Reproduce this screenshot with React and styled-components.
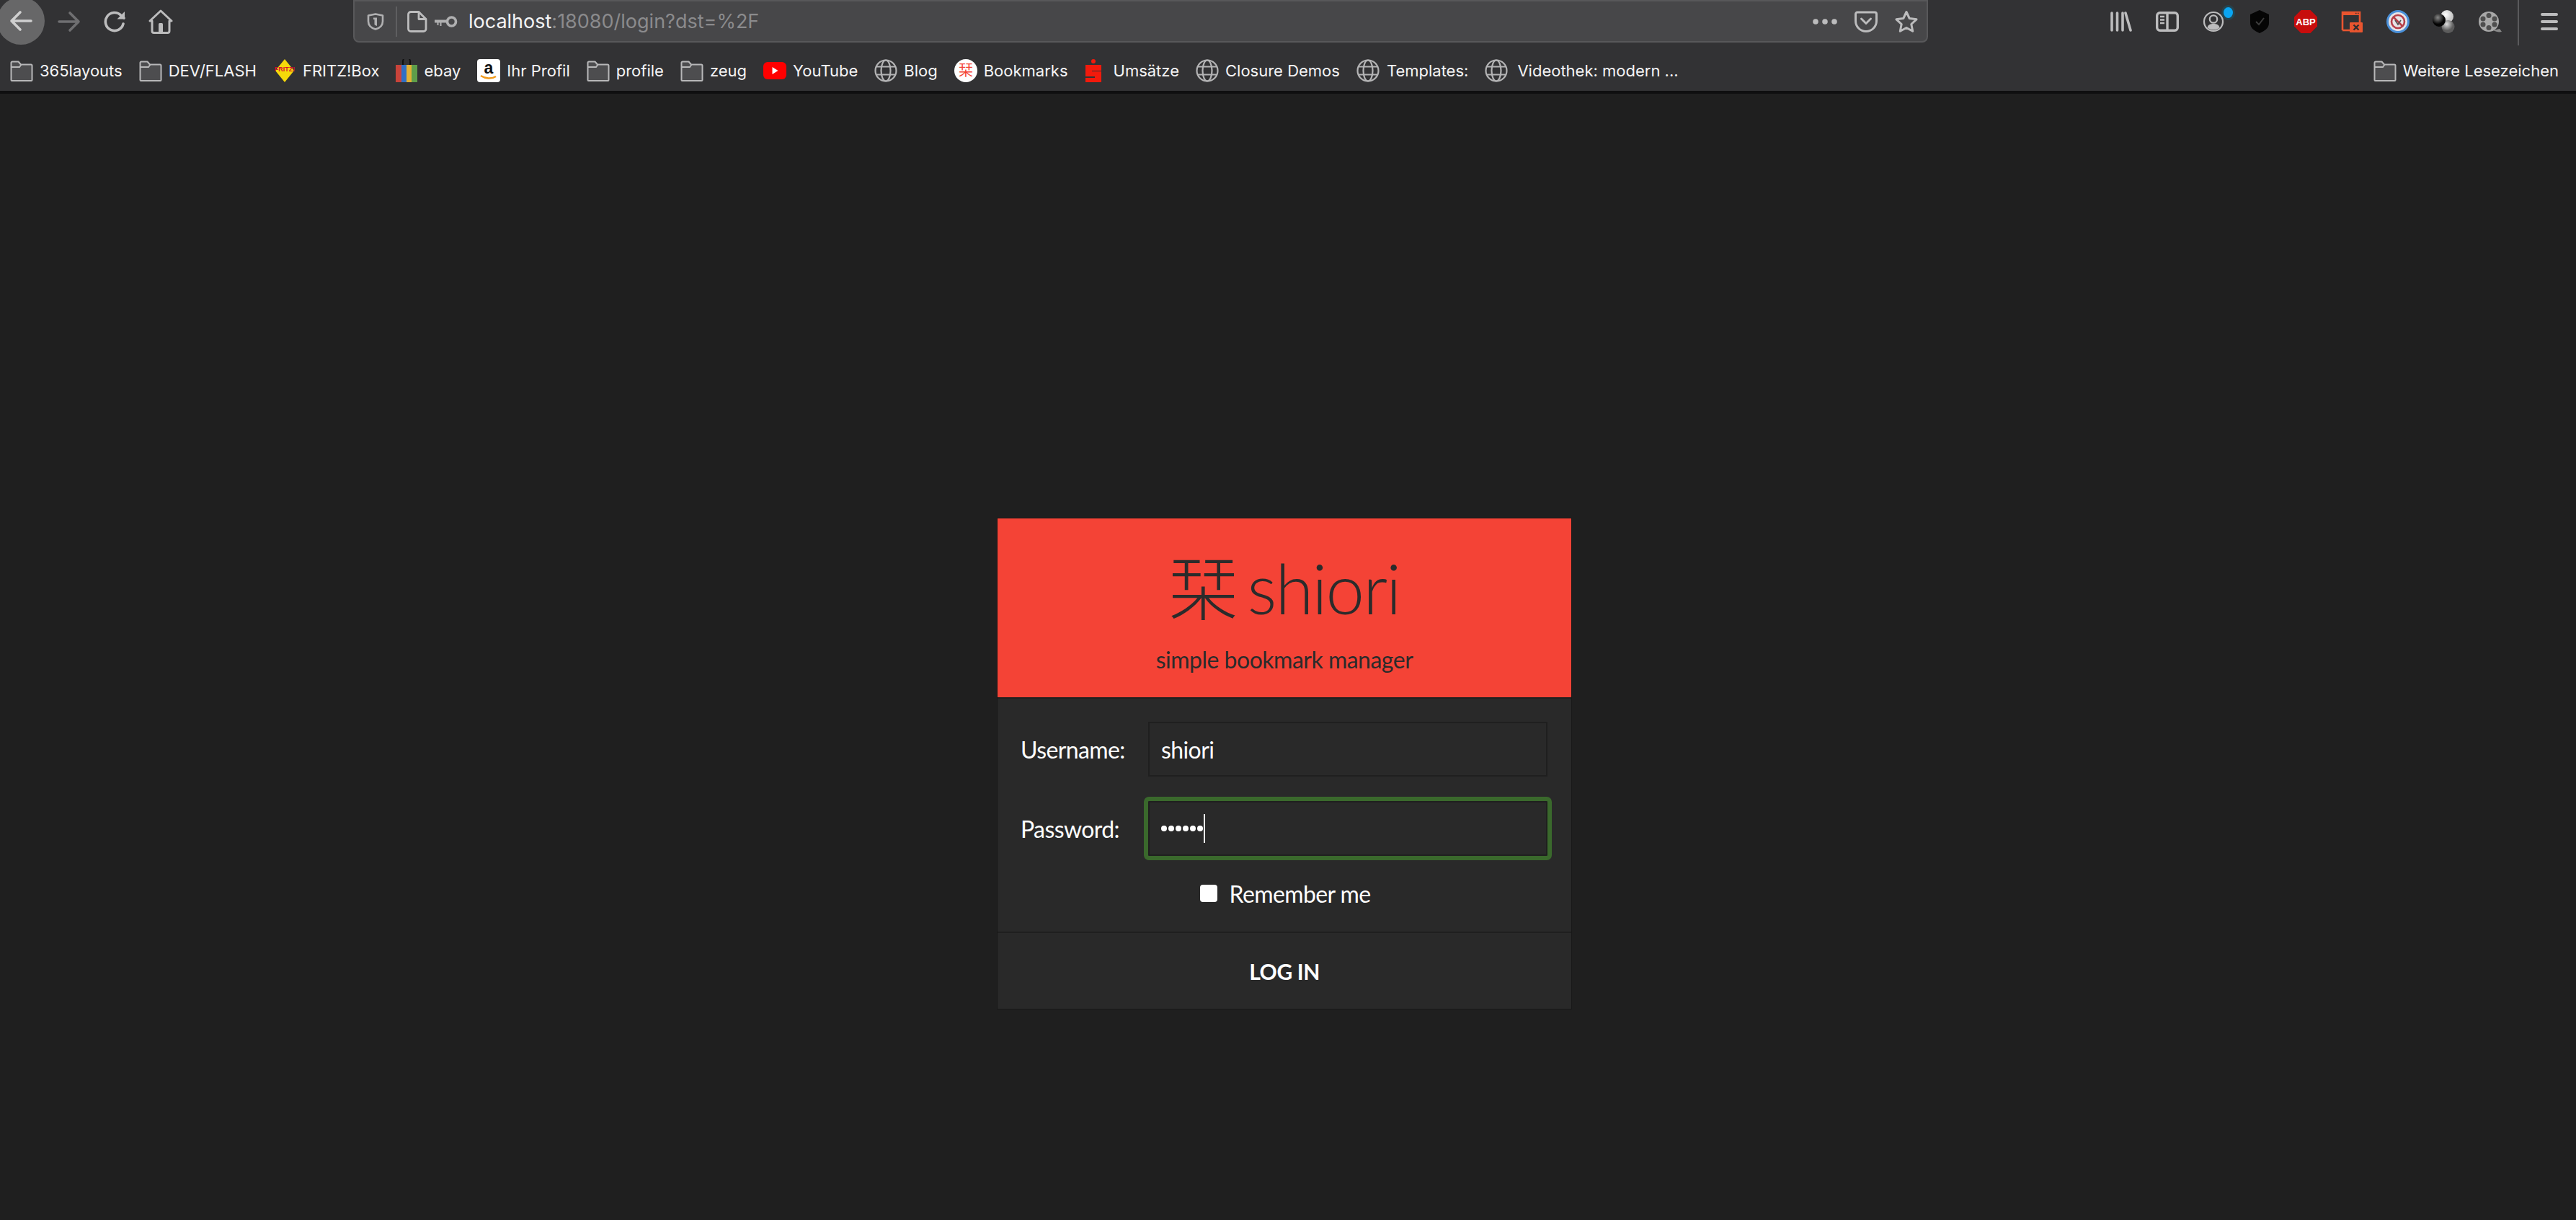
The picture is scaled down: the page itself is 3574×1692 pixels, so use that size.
import React from 'react';
import styled, { createGlobalStyle } from 'styled-components';

const Global = createGlobalStyle`
  html, body { margin: 0; padding: 0; background: #1f1f1f; }
  body { font-family: "Inter", "Liberation Sans", sans-serif; overflow: hidden; }
  * { box-sizing: border-box; }
`;

const Page = styled.div`
  width: 3574px;
  height: 1692px;
  display: flex;
  flex-direction: column;
  background: #1f1f1f;
  overflow: hidden;
`;

/* ---------- browser chrome ---------- */
const Chrome = styled.header`
  height: 130px;
  flex: none;
  background: #323234;
  border-bottom: 4px solid #0f0f10;
`;

const Toolbar = styled.div`
  height: 64px;
  display: flex;
  align-items: flex-start;
  padding-right: 5px;
`;

const NavButton = styled.div`
  width: ${p => p.$w}px;
  height: 59px;
  margin-left: ${p => p.$ml || 0}px;
  flex: none;
  display: flex;
  align-items: center;
  justify-content: center;
`;

const BackButton = styled.div`
  width: 66px;
  height: 66px;
  margin: -4px 0 0 -4px;
  flex: none;
  border-radius: 50%;
  background: #676768;
  display: flex;
  align-items: center;
  justify-content: center;
`;

const UrlBar = styled.div`
  width: 2185px;
  height: 59px;
  margin-left: 250px;
  flex: none;
  display: flex;
  align-items: center;
  background: #474749;
  border: 2px solid #58585a;
  border-radius: 0 0 8px 8px;
  padding: 0 12px 0 17px;
`;

const UrlDivider = styled.span`
  width: 2px;
  height: 42px;
  margin: 0 14px 0 16px;
  background: #5e5e60;
`;

const UrlText = styled.div`
  margin-left: 15px;
  flex: 1;
  font-size: 27px;
  color: #8b8b8d;
  white-space: nowrap;
  b { font-weight: 400; color: #f4f4f5; }
`;

const UrlAction = styled.span`
  margin-left: ${p => p.$ml || 0}px;
  display: flex;
`;

const Extensions = styled.div`
  margin-left: auto;
  display: flex;
  height: 59px;
`;

const ExtSlot = styled.div`
  width: 64px;
  height: 59px;
  display: flex;
  align-items: center;
  justify-content: center;
  position: relative;
`;

const ToolbarSep = styled.span`
  width: 2px;
  height: 63px;
  margin-left: 6px;
  flex: none;
  background: #5a5a5c;
`;

const MenuSlot = styled(ExtSlot)`
  margin-left: 10px;
`;

const BookmarksBar = styled.nav`
  height: 62px;
  display: flex;
  align-items: center;
  padding: 6px 24px 0 14px;
  gap: 23px;
`;

const Bookmark = styled.div`
  display: flex;
  align-items: center;
  gap: ${p => p.$gap || 9}px;
  font-size: 22px;
  color: #f4f4f5;
  white-space: nowrap;
  margin-left: ${p => (p.$end ? 'auto' : 0)};
  svg { flex: none; }
`;

/* ---------- login card ---------- */
const Main = styled.main`
  flex: 1;
  display: flex;
  justify-content: center;
  align-items: flex-start;
  padding: 588px 10px 0 0;
`;

const Card = styled.section`
  width: 798px;
  border: 1px solid #181818;
  background: #292929;
  font-family: "Lato", "Noto Sans", sans-serif;
  color: #fff;
`;

const Header = styled.div`
  height: 248px;
  background: #f44336;
  color: #2b2b2b;
  display: flex;
  flex-direction: column;
  align-items: center;
`;

const Logo = styled.div`
  margin-top: 48px;
  height: 96px;
  line-height: 96px;
  font-size: 96px;
  font-weight: 300;
  letter-spacing: -2px;
  word-spacing: -9px;
  white-space: nowrap;
  font-family: "Lato", "Noto Sans CJK JP", sans-serif;
`;

const Tagline = styled.div`
  margin-top: 32px;
  font-size: 32px;
  line-height: 40px;
  letter-spacing: -0.5px;
`;

const Form = styled.div`
  border-top: 2px solid #1f1f1f;
  padding: 32px 32px 0;
  height: 327px;
  border-bottom: 2px solid #1f1f1f;
`;

const Row = styled.div`
  display: flex;
  align-items: center;
  height: 76px;
  margin-bottom: ${p => p.$mb || 0}px;
`;

const Label = styled.label`
  width: 177px;
  flex: none;
  font-size: 32px;
  letter-spacing: -0.6px;
`;

const Input = styled.input`
  width: 554px;
  height: 76px;
  flex: none;
  padding: 0 16px;
  background: #292929;
  border: 2px solid #1f1f1f;
  color: #fff;
  font: 32px "Lato", sans-serif;
  letter-spacing: -0.6px;
  outline: none;
`;

const FocusField = styled.div`
  width: 554px;
  height: 76px;
  flex: none;
  padding: 0 16px;
  display: flex;
  align-items: center;
  background: #292929;
  border: 2px solid #1f1f1f;
  outline: 6px solid #3a692c;
  border-radius: 1px;
`;

const Dots = styled.span`
  display: flex;
  gap: 2px;
`;

const Dot = styled.i`
  width: 8px;
  height: 8px;
  border-radius: 50%;
  background: #fff;
`;

const Caret = styled.i`
  width: 2px;
  height: 40px;
  margin-left: 1px;
  background: #fff;
`;

const Remember = styled.label`
  display: flex;
  align-items: center;
  justify-content: center;
  gap: 16px;
  padding-left: 3px;
  font-size: 32px;
  letter-spacing: -0.6px;
  margin-top: 30px;
  height: 44px;
`;

const Check = styled.input`
  appearance: none;
  width: 24px;
  height: 24px;
  margin: 0;
  background: #fff;
  border-radius: 4px;
`;

const LoginButton = styled.button`
  display: block;
  width: 100%;
  height: 105px;
  border: 0;
  background: #292929;
  color: #fff;
  font: 700 30px "Lato", sans-serif;
  letter-spacing: -0.4px;
  text-transform: uppercase;
`;

/* ---------- icons ---------- */
const stroke = { fill: 'none', stroke: '#bcbcbd', strokeWidth: 3.4, strokeLinecap: 'round', strokeLinejoin: 'round' };

const Arrow = ({ color, dir }) => (
  <svg width="32" height="30" viewBox="0 0 32 30">
    <path
      d={dir === 'left' ? 'M30 15H3M15 3 3 15l12 12' : 'M2 15h27M17 3l12 12-12 12'}
      fill="none" stroke={color} strokeWidth="3.6" strokeLinecap="round" strokeLinejoin="round"
    />
  </svg>
);

const Reload = () => (
  <svg width="32" height="32" viewBox="0 0 32 32">
    <path d="M27 19a12.5 12.5 0 1 1-3-11.5L28 11" {...stroke} strokeWidth="3.6" />
    <path d="M29 2v10.5H18.5z" fill="#bcbcbd" />
  </svg>
);

const Home = () => (
  <svg width="34" height="34" viewBox="0 0 34 34">
    <path d="M2 16 17 2l15 14-3 0v14a2.5 2.5 0 0 1-2.5 2.5h-19A2.5 2.5 0 0 1 5 30V16z" {...stroke} strokeWidth="3" />
    <rect x="14" y="19" width="6" height="13" rx="1.5" fill="#bcbcbd" />
  </svg>
);

const UrlShield = () => (
  <svg width="24" height="24" viewBox="0 0 24 24">
    <path d="M2 3.5 12 1.5l10 2v8c0 6-4.5 9.5-10 11-5.5-1.5-10-5-10-11z" fill="none" stroke="#b0b0b1" strokeWidth="2.6" strokeLinejoin="round" />
    <path d="M9 6.5h5V18l-2.5-1-1-1V9H9z" fill="#b0b0b1" />
  </svg>
);

const PageIcon = () => (
  <svg width="28" height="30" viewBox="0 0 28 30">
    <path d="M5 1.5h11l10 10V25a3.5 3.5 0 0 1-3.5 3.5H5A3.5 3.5 0 0 1 1.5 25V5A3.5 3.5 0 0 1 5 1.5z" {...stroke} strokeWidth="2.8" />
    <path d="M16 2v9.5h9.5" {...stroke} strokeWidth="2.8" />
  </svg>
);

const KeySlot = styled.span`
  margin-left: 10px;
  display: flex;
`;

const KeyIcon = () => (
  <svg width="32" height="18" viewBox="0 0 32 18">
    <circle cx="23.5" cy="9" r="6" fill="none" stroke="#b0b0b1" strokeWidth="3.6" />
    <path d="M0 6.5h17v4H9.5V15h-2v-4.500h-2V14h-2v-3.500H0z" fill="#b0b0b1" />
  </svg>
);

const MoreDots = () => (
  <svg width="34" height="8" viewBox="0 0 34 8">
    <circle cx="4" cy="4" r="3.8" fill="#bcbcbd" />
    <circle cx="17" cy="4" r="3.8" fill="#bcbcbd" />
    <circle cx="30" cy="4" r="3.8" fill="#bcbcbd" />
  </svg>
);

const Pocket = () => (
  <svg width="32" height="30" viewBox="0 0 32 30">
    <path d="M4 2h24a2.500 2.500 0 0 1 2.500 2.500V14c0 8-6.500 14.500-14.500 14.500S1.500 22 1.500 14V4.500A2.500 2.500 0 0 1 4 2z" {...stroke} strokeWidth="3" />
    <path d="m9.500 11 6.500 6.500 6.500-6.500" {...stroke} strokeWidth="3" />
  </svg>
);

const Star = () => (
  <svg width="32" height="32" viewBox="0 0 32 32">
    <path d="M16 2.500 20.200 11.500 30 12.800 22.800 19.500 24.700 29.300 16 24.500 7.300 29.300 9.200 19.500 2 12.800 11.800 11.500z" {...stroke} strokeWidth="3" />
  </svg>
);

const Library = () => (
  <svg width="30" height="28" viewBox="0 0 30 28">
    <path d="M2 2v24M9.500 2v24M17 2v24M21 2l7 24" {...stroke} strokeWidth="3.6" />
  </svg>
);

const Sidebar = () => (
  <svg width="32" height="28" viewBox="0 0 32 28">
    <rect x="1.7" y="1.7" width="28.600" height="24.600" rx="4" {...stroke} strokeWidth="3.4" />
    <path d="M16 2v24" {...stroke} strokeWidth="3.4" />
    <path d="M6 7h6M6 11.500h6M6 16h6" {...stroke} strokeWidth="2.4" strokeLinecap="butt" />
  </svg>
);

const Account = () => (
  <svg width="30" height="30" viewBox="0 0 30 30">
    <circle cx="15" cy="15" r="13" fill="none" stroke="#bcbcbd" strokeWidth="2.2" />
    <circle cx="15" cy="11.500" r="5.200" fill="none" stroke="#bcbcbd" strokeWidth="2.2" />
    <path d="M6.500 23c1-4 4.500-5 8.500-5s7.500 1 8.500 5c-2 2-5 3.500-8.500 3.500S8.500 25 6.500 23z" fill="#bcbcbd" />
  </svg>
);

const BadgeDot = styled.span`
  position: absolute;
  left: 46px;
  top: 10px;
  width: 13px;
  height: 15px;
  border-radius: 50%;
  background: #0aa5f2;
  box-shadow: 0 0 0 3px #24444f;
`;

const BlackShield = () => (
  <svg width="26" height="32" viewBox="0 0 26 32">
    <path d="M13 0 26 6v12c0 7-6 11-13 14C6 29 0 25 0 18V6z" fill="#050505" />
    <path d="m8 16 4 4 7-9" fill="none" stroke="#3c3c3c" strokeWidth="2" />
  </svg>
);

const Abp = () => (
  <svg width="32" height="32" viewBox="0 0 32 32">
    <path d="M9.500 0h13L32 9.500v13L22.500 32h-13L0 22.500v-13z" fill="#c70d0d" />
    <text x="16" y="21" textAnchor="middle" fontFamily="Liberation Sans" fontWeight="700" fontSize="13" fill="#fff">ABP</text>
  </svg>
);

const PopupBlock = () => (
  <svg width="30" height="30" viewBox="0 0 30 30">
    <path d="M2 27V2h24v14" fill="none" stroke="#e9552f" strokeWidth="2.6" />
    <path d="M2 27h10" stroke="#e9552f" strokeWidth="2.6" />
    <rect x="1" y="1" width="26" height="5" fill="#e9552f" />
    <path d="M20 3.500h1.500M23 3.500h1.500" stroke="#2e2e30" strokeWidth="1.5" />
    <rect x="12" y="16" width="18" height="14" rx="1" fill="#e9552f" />
    <path d="m17.500 19.500 7 7m0-7-7 7" stroke="#2e2e30" strokeWidth="2.4" />
  </svg>
);

const Blocker = () => (
  <svg width="32" height="32" viewBox="0 0 32 32">
    <circle cx="16" cy="16" r="14.500" fill="#e8e4e6" stroke="#4a90d9" strokeWidth="3" />
    <circle cx="16" cy="16" r="9" fill="none" stroke="#b6404a" strokeWidth="2.6" />
    <path d="m9.500 9.500 13 13" stroke="#b6404a" strokeWidth="2.6" />
    <path d="m12 14 4 6 4-6" fill="none" stroke="#555" strokeWidth="1.6" />
  </svg>
);

const Balls = () => (
  <svg width="32" height="32" viewBox="0 0 32 32">
    <defs>
      <radialGradient id="ballW" cx="40%" cy="35%"><stop offset="0" stopColor="#fff" /><stop offset="1" stopColor="#c8c8c8" /></radialGradient>
      <radialGradient id="ballG" cx="40%" cy="30%"><stop offset="0" stopColor="#ddd" /><stop offset="1" stopColor="#5c5c5c" /></radialGradient>
      <radialGradient id="ballK" cx="40%" cy="30%"><stop offset="0" stopColor="#888" /><stop offset="1" stopColor="#050505" /></radialGradient>
    </defs>
    <circle cx="20" cy="9" r="9" fill="url(#ballW)" />
    <circle cx="21.500" cy="23" r="9" fill="url(#ballG)" />
    <circle cx="9" cy="14" r="9" fill="url(#ballK)" />
  </svg>
);

const Film = () => (
  <svg width="32" height="32" viewBox="0 0 32 32">
    <circle cx="14" cy="16" r="14" fill="#a8a8a8" />
    <path d="M20 28c4 2 8 3 12 2l-3-4z" fill="#8a8a8a" />
    <circle cx="14" cy="7.500" r="3.500" fill="#4e4e4e" />
    <circle cx="14" cy="24.500" r="3.500" fill="#4e4e4e" />
    <circle cx="6" cy="12" r="3.500" fill="#4e4e4e" />
    <circle cx="22" cy="12" r="3.500" fill="#4e4e4e" />
    <circle cx="6" cy="20" r="3.500" fill="#4e4e4e" />
    <circle cx="22" cy="20" r="3.500" fill="#4e4e4e" />
  </svg>
);

const Menu = () => (
  <svg width="24" height="26" viewBox="0 0 24 26">
    <path d="M2 3h20M2 13h20M2 23h20" {...stroke} strokeWidth="4" />
  </svg>
);

const Folder = () => (
  <svg width="32" height="29" viewBox="0 0 32 29">
    <path d="M1.500 27V3a1.500 1.500 0 0 1 1.500-1.500h8.500L15 5.500h14A1.500 1.500 0 0 1 30.500 7v20a1 1 0 0 1-1 1H2.500a1 1 0 0 1-1-1z" fill="#4d4d4f" stroke="#b8b8b9" strokeWidth="2" strokeLinejoin="round" />
    <path d="M2 9h11l2.500-3.500" fill="none" stroke="#b8b8b9" strokeWidth="2" />
  </svg>
);

const Globe = () => (
  <svg width="32" height="32" viewBox="0 0 32 32">
    <g fill="none" stroke="#b4b4b5" strokeWidth="2.2">
      <circle cx="16" cy="16" r="14.500" />
      <ellipse cx="16" cy="16" rx="6.500" ry="14.500" />
      <path d="M3 10.500h26M3 21.500h26" />
    </g>
  </svg>
);

const Fritz = () => (
  <svg width="32" height="32" viewBox="0 0 32 32">
    <path d="M16 0 29 16 16 32 3 16z" fill="#f5d90a" />
    <text x="16" y="17" textAnchor="middle" fontFamily="Liberation Sans" fontWeight="700" fontSize="9" fill="#d3122e">FRITZ!</text>
  </svg>
);

const Ebay = () => (
  <svg width="30" height="32" viewBox="0 0 30 32">
    <path d="M10 8V3a5 5 0 0 1 10 0v5" fill="none" stroke="#111" strokeWidth="2" />
    <rect x="0" y="8" width="8" height="24" fill="#c9433a" />
    <rect x="8" y="8" width="7" height="24" fill="#2f6fc4" />
    <rect x="15" y="8" width="7" height="24" fill="#e2b034" />
    <rect x="22" y="8" width="8" height="24" fill="#5e9e4a" />
  </svg>
);

const Amazon = () => (
  <svg width="32" height="32" viewBox="0 0 32 32">
    <rect width="32" height="32" rx="4" fill="#fff" />
    <text x="16" y="20" textAnchor="middle" fontFamily="Liberation Sans" fontWeight="700" fontSize="23" fill="#111">a</text>
    <path d="M5 23c6 4 15 5 21 1" fill="none" stroke="#f19a1c" strokeWidth="2.4" />
  </svg>
);

const Youtube = () => (
  <svg width="32" height="24" viewBox="0 0 32 24">
    <rect width="32" height="24" rx="6" fill="#f00" />
    <path d="m12.500 7 8 5-8 5z" fill="#fff" />
  </svg>
);

const ShioriFav = () => (
  <svg width="32" height="32" viewBox="0 0 32 32">
    <circle cx="16" cy="16" r="16" fill="#fff" />
    <text x="16" y="23" textAnchor="middle" fontFamily="Noto Sans CJK JP" fontSize="20" fill="#f44336">栞</text>
  </svg>
);

const Sparkasse = () => (
  <svg width="24" height="32" viewBox="0 0 24 32">
    <circle cx="12" cy="3" r="3" fill="#f21a0c" />
    <path d="M1 8h22v8H10v1h13v15H1v-6h13v-2H1z" fill="#f21a0c" />
  </svg>
);

const bookmarks = [
  ['365layouts', <Folder />],
  ['DEV/FLASH', <Folder />],
  ['FRITZ!Box', <Fritz />],
  ['ebay', <Ebay />],
  ['Ihr Profil', <Amazon />],
  ['profile', <Folder />],
  ['zeug', <Folder />],
  ['YouTube', <Youtube />],
  ['Blog', <Globe />],
  ['Bookmarks', <ShioriFav />],
  ['Umsätze', <Sparkasse />, 16],
  ['Closure Demos', <Globe />],
  ['Templates:', <Globe />, 10],
  ['Videothek: modern ...', <Globe />, 13],
];

const extensions = [
  <Library />, <Sidebar />, <><Account /><BadgeDot /></>, <BlackShield />, <Abp />,
  <PopupBlock />, <Blocker />, <Balls />, <Film />,
];

export default function App() {
  return (
    <Page>
      <Global />
      <Chrome>
        <Toolbar>
          <BackButton><Arrow dir="left" color="#cfcfcf" /></BackButton>
          <NavButton $w={34} $ml={17}><Arrow dir="right" color="#6f6f71" /></NavButton>
          <NavButton $w={32} $ml={31}><Reload /></NavButton>
          <NavButton $w={34} $ml={30}><Home /></NavButton>
          <UrlBar>
            <UrlShield />
            <UrlDivider />
            <PageIcon />
            <KeySlot><KeyIcon /></KeySlot>
            <UrlText><b>localhost</b>:18080/login?dst=%2F</UrlText>
            <MoreDots />
            <UrlAction $ml={24}><Pocket /></UrlAction>
            <UrlAction $ml={24}><Star /></UrlAction>
          </UrlBar>
          <Extensions>
            {extensions.map((icon, i) => <ExtSlot key={i}>{icon}</ExtSlot>)}
          </Extensions>
          <ToolbarSep />
          <MenuSlot><Menu /></MenuSlot>
        </Toolbar>
        <BookmarksBar>
          {bookmarks.map(([name, icon, gap]) => (
            <Bookmark key={name} $gap={gap}>{icon}{name}</Bookmark>
          ))}
          <Bookmark $end><Folder />Weitere Lesezeichen</Bookmark>
        </BookmarksBar>
      </Chrome>
      <Main>
        <Card>
          <Header>
            <Logo>栞 shiori</Logo>
            <Tagline>simple bookmark manager</Tagline>
          </Header>
          <Form>
            <Row $mb={34}>
              <Label>Username:</Label>
              <Input type="text" defaultValue="shiori" readOnly />
            </Row>
            <Row>
              <Label>Password:</Label>
              <FocusField>
                <Dots>{[0, 1, 2, 3, 4, 5].map(i => <Dot key={i} />)}</Dots>
                <Caret />
              </FocusField>
            </Row>
            <Remember>
              <Check type="checkbox" readOnly />
              Remember me
            </Remember>
          </Form>
          <LoginButton>Log in</LoginButton>
        </Card>
      </Main>
    </Page>
  );
}
